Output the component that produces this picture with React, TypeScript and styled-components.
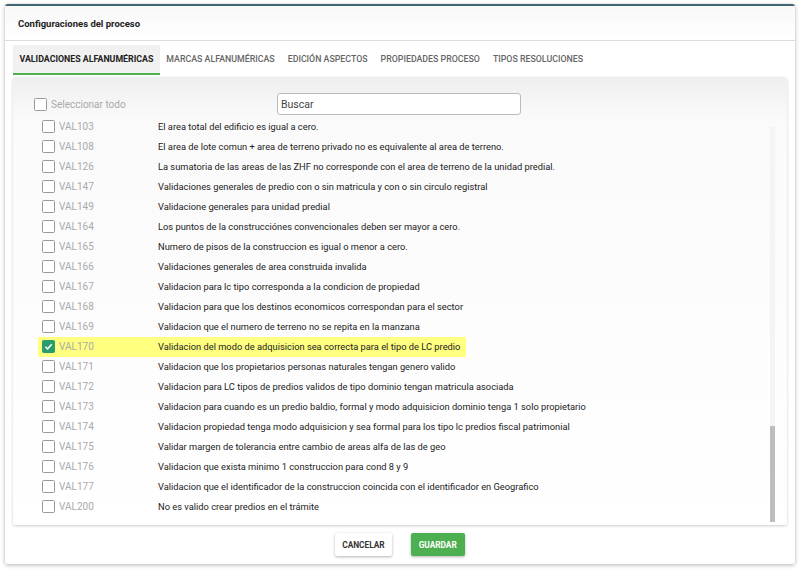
import React from "react";
import styled, { createGlobalStyle } from "styled-components";

const Global = createGlobalStyle`
  body { margin: 0; background: #fff; font-family: Roboto, "Liberation Sans", sans-serif; }
`;

const Page = styled.div`
  width: 800px; height: 570px; padding: 4px 5px 8px; box-sizing: border-box;
  background: #fff;
`;
const Dialog = styled.div`
  height: 100%; border-top: 2px solid #3d6470; border-radius: 3px;
  box-shadow: 0 1px 4px rgba(0,0,0,0.3); background: #fff;
  display: flex; flex-direction: column;
`;
const Header = styled.div`
  height: 34px; display: flex; align-items: center; padding-left: 13px;
  font-size: 9.5px; font-weight: 700; color: #222;
  border-bottom: 1px solid #ddd; background: linear-gradient(#f8f8f8, #fff);
`;
const Tabs = styled.div`
  display: flex; padding: 4px 8px 0; height: 30px; gap: 0;
`;
const Tab = styled.div<{ $active?: boolean }>`
  display: flex; align-items: center; padding: 0 6.5px;
  font-size: 8.8px; font-weight: ${p => (p.$active ? 700 : 500)};
  color: ${p => (p.$active ? "#222" : "#666")};
  background: ${p => (p.$active ? "#f1f1f1" : "transparent")};
  border-bottom: ${p => (p.$active ? "2px solid #4caf50" : "2px solid transparent")};
`;
const Panel = styled.div`
  margin: 2px 8px 0; height: 448px; border-radius: 3px;
  background: linear-gradient(#eeeeee, #fafafa 40px, #fff);
  box-shadow: 0 1px 3px rgba(0,0,0,0.2);
  display: flex; flex-direction: column; position: relative;
`;
const TopBar = styled.div`
  height: 42px; display: flex; align-items: center; padding: 12px 0 0 21px; box-sizing: border-box;
`;
const SelectAll = styled.label`
  display: flex; align-items: center; gap: 4px; width: 243px;
  font-size: 10px; color: #aaa;
`;
const Search = styled.div`
  width: 244px; height: 22px; border: 1px solid #bbb; border-radius: 3px;
  box-sizing: border-box; display: flex; align-items: center; padding-left: 3px;
  font-size: 10.5px; color: #444; background: #fff;
`;
const List = styled.div`
  flex: 1; overflow: hidden; margin-left: 25px; margin-right: 18px;
  margin-top: -3px;
`;
const Row = styled.div<{ $hl?: boolean }>`
  height: 20px; display: inline-flex; align-items: center; width: fit-content;
  background: ${p => (p.$hl ? "#ffff80" : "transparent")}; padding-right: 6px;
  padding-left: 4px;
`;
const RowWrap = styled.div` height: 20px; `;
const Box = styled.span<{ $on?: boolean }>`
  width: 11px; height: 11px; border: 1.5px solid ${p => (p.$on ? "#2a9d6f" : "#999")};
  background: ${p => (p.$on ? "#2a9d6f" : "#fff")}; border-radius: 1.5px;
  display: inline-flex; align-items: center; justify-content: center; flex: none;
`;
const Code = styled.span`
  width: 99px; padding-left: 4px; font-size: 10px; color: #aaa;
`;
const Desc = styled.span` font-size: 9.3px; color: #222; white-space: nowrap; `;
const Track = styled.div`
  position: absolute; right: 12px; top: 50px; bottom: 3px; width: 5px;
  background: #f4f4f4;
`;
const Thumb = styled.div`
  position: absolute; left: 0; right: 0; bottom: 0; height: 96px; background: #bdbdbd;
`;
const Footer = styled.div`
  flex: 1; display: flex; justify-content: center; align-items: center; gap: 19px;
`;
const Btn = styled.button<{ $primary?: boolean }>`
  height: 23px; padding: 0 ${p => (p.$primary ? 8 : 7)}px; border: none; border-radius: 2px;
  font-family: Roboto, sans-serif; font-size: 8.3px; font-weight: 700;
  background: ${p => (p.$primary ? "#4caf50" : "#fff")};
  color: ${p => (p.$primary ? "#fff" : "#333")};
  box-shadow: 0 1px 3px rgba(0,0,0,0.3);
`;

const rows: [string, string][] = [
  ["VAL103", "El area total del edificio es igual a cero."],
  ["VAL108", "El area de lote comun + area de terreno privado no es equivalente al area de terreno."],
  ["VAL126", "La sumatoria de las areas de las ZHF no corresponde con el area de terreno de la unidad predial."],
  ["VAL147", "Validaciones generales de predio con o sin matricula y con o sin circulo registral"],
  ["VAL149", "Validacione generales para unidad predial"],
  ["VAL164", "Los puntos de la construcciónes convencionales deben ser mayor a cero."],
  ["VAL165", "Numero de pisos de la construccion es igual o menor a cero."],
  ["VAL166", "Validaciones generales de area construida invalida"],
  ["VAL167", "Validacion para lc tipo corresponda a la condicion de propiedad"],
  ["VAL168", "Validacion para que los destinos economicos correspondan para el sector"],
  ["VAL169", "Validacion que el numero de terreno no se repita en la manzana"],
  ["VAL170", "Validacion del modo de adquisicion sea correcta para el tipo de LC predio"],
  ["VAL171", "Validacion que los propietarios personas naturales tengan genero valido"],
  ["VAL172", "Validacion para LC tipos de predios validos de tipo dominio tengan matricula asociada"],
  ["VAL173", "Validacion para cuando es un predio baldio, formal y modo adquisicion dominio tenga 1 solo propietario"],
  ["VAL174", "Validacion propiedad tenga modo adquisicion y sea formal para los tipo lc predios fiscal patrimonial"],
  ["VAL175", "Validar margen de tolerancia entre cambio de areas alfa de las de geo"],
  ["VAL176", "Validacion que exista minimo 1 construccion para cond 8 y 9"],
  ["VAL177", "Validacion que el identificador de la construccion coincida con el identificador en Geografico"],
  ["VAL200", "No es valido crear predios en el trámite"],
];

const Check = () => (
  <svg width="9" height="9" viewBox="0 0 10 10">
    <path d="M1.5 5.2 L4 7.6 L8.6 2.4" stroke="#fff" strokeWidth="1.6" fill="none" />
  </svg>
);

export default function App() {
  return (
    <Page>
      <Global />
      <Dialog>
        <Header>Configuraciones del proceso</Header>
        <Tabs>
          <Tab $active>VALIDACIONES ALFANUMÉRICAS</Tab>
          <Tab>MARCAS ALFANUMÉRICAS</Tab>
          <Tab>EDICIÓN ASPECTOS</Tab>
          <Tab>PROPIEDADES PROCESO</Tab>
          <Tab>TIPOS RESOLUCIONES</Tab>
        </Tabs>
        <Panel>
          <TopBar>
            <SelectAll><Box />Seleccionar todo</SelectAll>
            <Search>Buscar</Search>
          </TopBar>
          <List>
            {rows.map(([c, d]) => (
              <RowWrap key={c}>
                <Row $hl={c === "VAL170"}>
                  <Box $on={c === "VAL170"}>{c === "VAL170" && <Check />}</Box>
                  <Code>{c}</Code>
                  <Desc>{d}</Desc>
                </Row>
              </RowWrap>
            ))}
          </List>
          <Track><Thumb /></Track>
        </Panel>
        <Footer>
          <Btn>CANCELAR</Btn>
          <Btn $primary>GUARDAR</Btn>
        </Footer>
      </Dialog>
    </Page>
  );
}
